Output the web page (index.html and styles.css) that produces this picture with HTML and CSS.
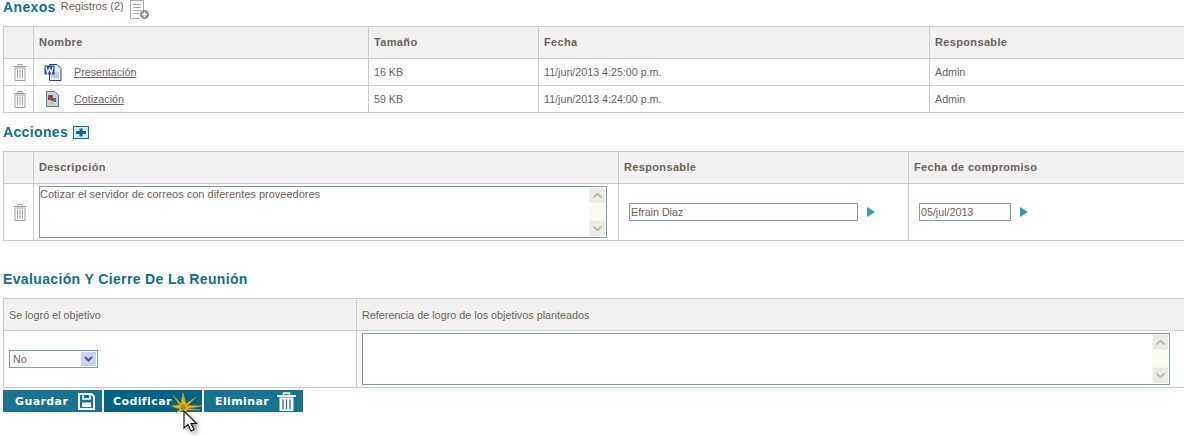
FILE: index.html
```html
<!DOCTYPE html>
<html lang="es">
<head>
<meta charset="utf-8">
<title>Reunión</title>
<link rel="stylesheet" href="styles.css">
</head>
<body>
<svg class="defs" width="0" height="0" aria-hidden="true">
  <symbol id="trash" viewBox="0 0 14 17">
    <path d="M0.500 2.500H13.500M5 2.500V0.500H9V2.500M2 4V16.500H12V4Z" fill="none" stroke="currentColor"/>
    <path d="M4.500 5.500V14.500M7 5.500V14.500M9.500 5.500V14.500" fill="none" stroke="currentColor"/>
  </symbol>
  <symbol id="arrow" viewBox="0 0 8 10"><path d="M0 0L8 5L0 10Z" fill="#3a97a8"/></symbol>
  <symbol id="up" viewBox="0 0 9 5"><path d="M0.500 4.500L4.500 0.800L8.500 4.500" fill="none" stroke="#bdbdb5" stroke-width="2"/></symbol>
  <symbol id="down" viewBox="0 0 9 5"><path d="M0.500 0.500L4.500 4.200L8.500 0.500" fill="none" stroke="#bdbdb5" stroke-width="2"/></symbol>
</svg>

<main class="page">
  <section class="head head-anexos">
    <h2 class="title">Anexos</h2>
    <span class="count">Registros (2)</span>
    <svg class="add-doc" width="21" height="20" viewBox="0 0 21 20"><path d="M1.500 0.500H14.500V14M11 18.500H1.500V0.500" fill="#fff" stroke="#a9a9a9"/><path d="M4 4.500H12M4 7.500H12M4 10.500H12M4 13.500H10" stroke="#a9a9a9"/><circle cx="15.500" cy="14.500" r="4.500" fill="#8d8d8d"/><path d="M13 14.500H18M15.500 12V17" stroke="#fff" stroke-width="1.400"/></svg>
  </section>
  <table class="grid grid-anexos">
    <thead><tr><th class="c-del"></th><th class="c-a1">Nombre</th><th class="c-a2">Tamaño</th><th class="c-a3">Fecha</th><th>Responsable</th></tr></thead>
    <tbody>
      <tr>
        <td class="del"><svg class="trash" width="14" height="17"><use href="#trash"/></svg></td>
        <td><span class="file">
          <svg width="18" height="17" viewBox="0 0 18 17"><path d="M5.500 0.500H13L17 4.500V16.500H5.500Z" fill="#e4ecf8" stroke="#27408f"/><path d="M7 9H15M7 11H15M7 13H15" stroke="#8fa7d6"/><rect x="0.500" y="1.500" width="10" height="9" fill="#2b4fa8"/><path d="M2 3L3.500 9L5.500 4.500L7.500 9L9 3" fill="none" stroke="#fff" stroke-width="1.300"/></svg>
          <a href="#">Presentación</a></span></td>
        <td>16 KB</td><td>11/jun/2013 4:25:00 p.m.</td><td>Admin</td>
      </tr>
      <tr>
        <td class="del"><svg class="trash" width="14" height="17"><use href="#trash"/></svg></td>
        <td><span class="file">
          <svg width="18" height="17" viewBox="0 0 18 17"><path d="M2.500 0.500H10.500L14.500 4V15.500H2.500Z" fill="#bcd6ee" stroke="#5a7f9e"/><rect x="4" y="4" width="5" height="5" fill="#d8261c"/><rect x="7" y="7" width="5" height="4" fill="#2a63cc"/><rect x="6" y="10" width="4" height="3" fill="#f0c419"/></svg>
          <a href="#">Cotización</a></span></td>
        <td>59 KB</td><td>11/jun/2013 4:24:00 p.m.</td><td>Admin</td>
      </tr>
    </tbody>
  </table>

  <section class="head head-acciones">
    <h2 class="title">Acciones</h2>
    <svg class="add" width="16" height="13" viewBox="0 0 16 13"><rect x="0.500" y="0.500" width="15" height="12" fill="#d6e8ee" stroke="#0e7490"/><path d="M3 6.500H13M8 2.500V10.500" stroke="#0e6a86" stroke-width="3"/></svg>
  </section>
  <table class="grid grid-acciones">
    <thead><tr><th class="c-del"></th><th class="c-b1">Descripción</th><th class="c-b2">Responsable</th><th>Fecha de compromiso</th></tr></thead>
    <tbody>
      <tr class="tall">
        <td class="del"><svg class="trash" width="14" height="17"><use href="#trash"/></svg></td>
        <td>
          <div class="area area-desc">Cotizar el servidor de correos con diferentes proveedores
            <span class="scroll"><span class="sbtn"><svg width="9" height="5"><use href="#up"/></svg></span><span class="sbtn"><svg width="9" height="5"><use href="#down"/></svg></span></span>
          </div>
        </td>
        <td><span class="field"><span class="input input-name">Efrain Diaz</span><svg width="8" height="10"><use href="#arrow"/></svg></span></td>
        <td><span class="field"><span class="input input-date">05/jul/2013</span><svg width="8" height="10"><use href="#arrow"/></svg></span></td>
      </tr>
    </tbody>
  </table>

  <section class="head head-eval">
    <h2 class="title">Evaluación Y Cierre De La Reunión</h2>
  </section>
  <table class="grid grid-eval">
    <thead><tr><th class="c-c1 plain">Se logró el objetivo</th><th class="plain">Referencia de logro de los objetivos planteados</th></tr></thead>
    <tbody>
      <tr class="tall">
        <td class="cell-select"><span class="select">No<span class="select-btn"><svg width="9" height="6" viewBox="0 0 9 6"><path d="M1 1L4.500 4.500L8 1" fill="none" stroke="#4a5d85" stroke-width="2"/></svg></span></span></td>
        <td class="cell-area">
          <div class="area area-ref">
            <span class="scroll"><span class="sbtn"><svg width="9" height="5"><use href="#up"/></svg></span><span class="sbtn"><svg width="9" height="5"><use href="#down"/></svg></span></span>
          </div>
        </td>
      </tr>
    </tbody>
  </table>

  <div class="actions">
    <button class="btn btn-save" type="button">Guardar
      <svg width="17" height="17" viewBox="0 0 17 17"><path d="M1 1H13.500L16 3.500V16H1Z" fill="none" stroke="#fff" stroke-width="2"/><path d="M5 1V6H12V1" fill="none" stroke="#fff" stroke-width="1.500"/><rect x="4" y="9.500" width="9" height="4.500" fill="#fff"/></svg>
    </button>
    <button class="btn btn-code" type="button">Codificar</button>
    <button class="btn btn-del" type="button">Eliminar
      <svg width="19" height="19" viewBox="0 0 19 19"><path d="M0 4H19" stroke="#fff" stroke-width="2"/><path d="M6.500 3.500V1H12.500V3.500" fill="none" stroke="#fff" stroke-width="1.500"/><path d="M2.500 5.500H16.500V19H2.500Z" fill="#fff"/><path d="M6 7.500V17M9.500 7.500V17M13 7.500V17" stroke="#17738f" stroke-width="1.300"/></svg>
    </button>
    <svg class="cursor" width="46" height="46" viewBox="0 0 46 46">
      <path class="cursor-shadow" d="M23 24L23 41L27 37.500L30 44L33 42.500L30 36.500L35.500 36.500Z" fill="#444"/>
      <path d="M9 5L17 14L19 3L22 14L32 7L23.500 15.500L39 16L23.500 18.500L36 20L22 20L24 25L19 20.500L12 23L16 19L7 16L15.500 15Z" fill="#e8ad12" stroke="#d8a010" stroke-width=".5"/>
      <circle cx="19" cy="17" r="2.500" fill="#7e9a3a"/>
      <path d="M20 21L20 38L24 34.500L27 41L30 39.500L27 33.500L32.500 33.500Z" fill="#fff" stroke="#111" stroke-width="1.100"/>
    </svg>
  </div>
</main>
</body>
</html>
```
FILE: styles.css
```css
html, body { margin: 0; padding: 0; }
body {
  width: 1184px;
  height: 436px;
  overflow: hidden;
  background: #fff;
  font-family: "Liberation Sans", Arial, sans-serif;
  font-size: 10.7px;
  color: #6b6257;
}
.defs { position: absolute; }
.page { padding-left: 3px; }
.head { display: flex; align-items: center; box-sizing: border-box; }
.head-anexos { height: 26px; align-items: flex-start; }
.head-acciones { height: 38px; }
.head-eval { height: 57px; padding-top: 19px; }
.title {
  margin: 0;
  font-size: 14px;
  line-height: 15px;
  font-weight: bold;
  color: #0e6f8c;
  letter-spacing: 0.36px;
}
.count { margin-left: 5px; font-size: 11px; line-height: 13px; }
.add-doc { margin-left: 5px; }
.add { margin-left: 5px; }
.grid {
  width: 1190px;
  table-layout: fixed;
  border-collapse: collapse;
}
.grid th, .grid td { border: 1px solid #ccc; padding: 0 0 0 5px; text-align: left; }
.grid th {
  height: 29px;
  padding-bottom: 2px;
  background: #f1f1f1;
  font-size: 11px;
  font-weight: bold;
  color: #6b6257;
  letter-spacing: 0.35px;
}
.grid th.plain { height: 31px; padding-bottom: 0; font-size: 10.8px; font-weight: normal; letter-spacing: 0; }
.grid td { height: 26px; font-size: 10.7px; }
.grid .tall td { height: 56px; }
.c-del { width: 24px; }
.c-a1 { width: 329px; }
.c-a2 { width: 164px; }
.c-a3 { width: 385px; }
.c-b1 { width: 579px; }
.c-b2 { width: 284px; }
.c-c1 { width: 347px; }
.grid td.del { padding: 0 0 0 2px; text-align: center; }
.trash { display: block; margin: 0 auto; color: #a0a0a0; }
.file { display: flex; align-items: center; gap: 12px; padding-left: 5px; }
.file a { color: #6b6257; text-decoration: underline; }
.area {
  position: relative;
  box-sizing: border-box;
  border: 1px solid #7f9db9;
  background: #fff;
  padding: 1px 0 0 0;
  font-size: 11px;
  line-height: 13px;
}
.area-desc { width: 568px; height: 52px; }
.area-ref { width: 808px; height: 52px; }
.scroll {
  position: absolute;
  top: 0;
  right: 0;
  bottom: 0;
  width: 17px;
  background: #fbfbf4;
  display: flex;
  flex-direction: column;
  justify-content: space-between;
}
.sbtn {
  height: 17px;
  display: flex;
  align-items: center;
  justify-content: center;
  background: #ebebe3;
  border: 1px solid #f6f6ef;
  border-right-color: #fff;
  border-bottom-color: #fff;
  box-sizing: border-box;
}
.field { display: flex; align-items: center; gap: 9px; padding-left: 5px; }
.input {
  box-sizing: border-box;
  height: 18px;
  border: 1px solid #7f9db9;
  line-height: 16px;
  padding-left: 1px;
  background: #fff;
}
.input-name { width: 229px; }
.input-date { width: 92px; }
.select {
  display: flex;
  justify-content: space-between;
  align-items: center;
  box-sizing: border-box;
  width: 89px;
  height: 18px;
  border: 1px solid #7f9db9;
  padding: 0 1px 0 3px;
}
.select-btn {
  width: 15px;
  height: 14px;
  background: #c3d3f8;
  display: flex;
  align-items: center;
  justify-content: center;
}
.actions { position: relative; display: flex; gap: 2px; margin-top: 2px; }
.btn {
  display: flex;
  align-items: center;
  height: 22px;
  padding: 0;
  border: 0;
  background: #17738f;
  color: #fff;
  font-family: "DejaVu Sans", sans-serif;
  font-size: 11px;
  font-weight: bold;
  letter-spacing: 0.4px;
}
.btn-save { width: 99px; padding-left: 12px; gap: 10px; }
.btn-code { width: 98px; padding-left: 9px; background: #006385; }
.btn-del { width: 99px; padding-left: 11px; gap: 8px; }
.cursor { position: absolute; left: 161px; top: 0; }
.cursor-shadow { opacity: .7; filter: blur(2.5px); }
```
